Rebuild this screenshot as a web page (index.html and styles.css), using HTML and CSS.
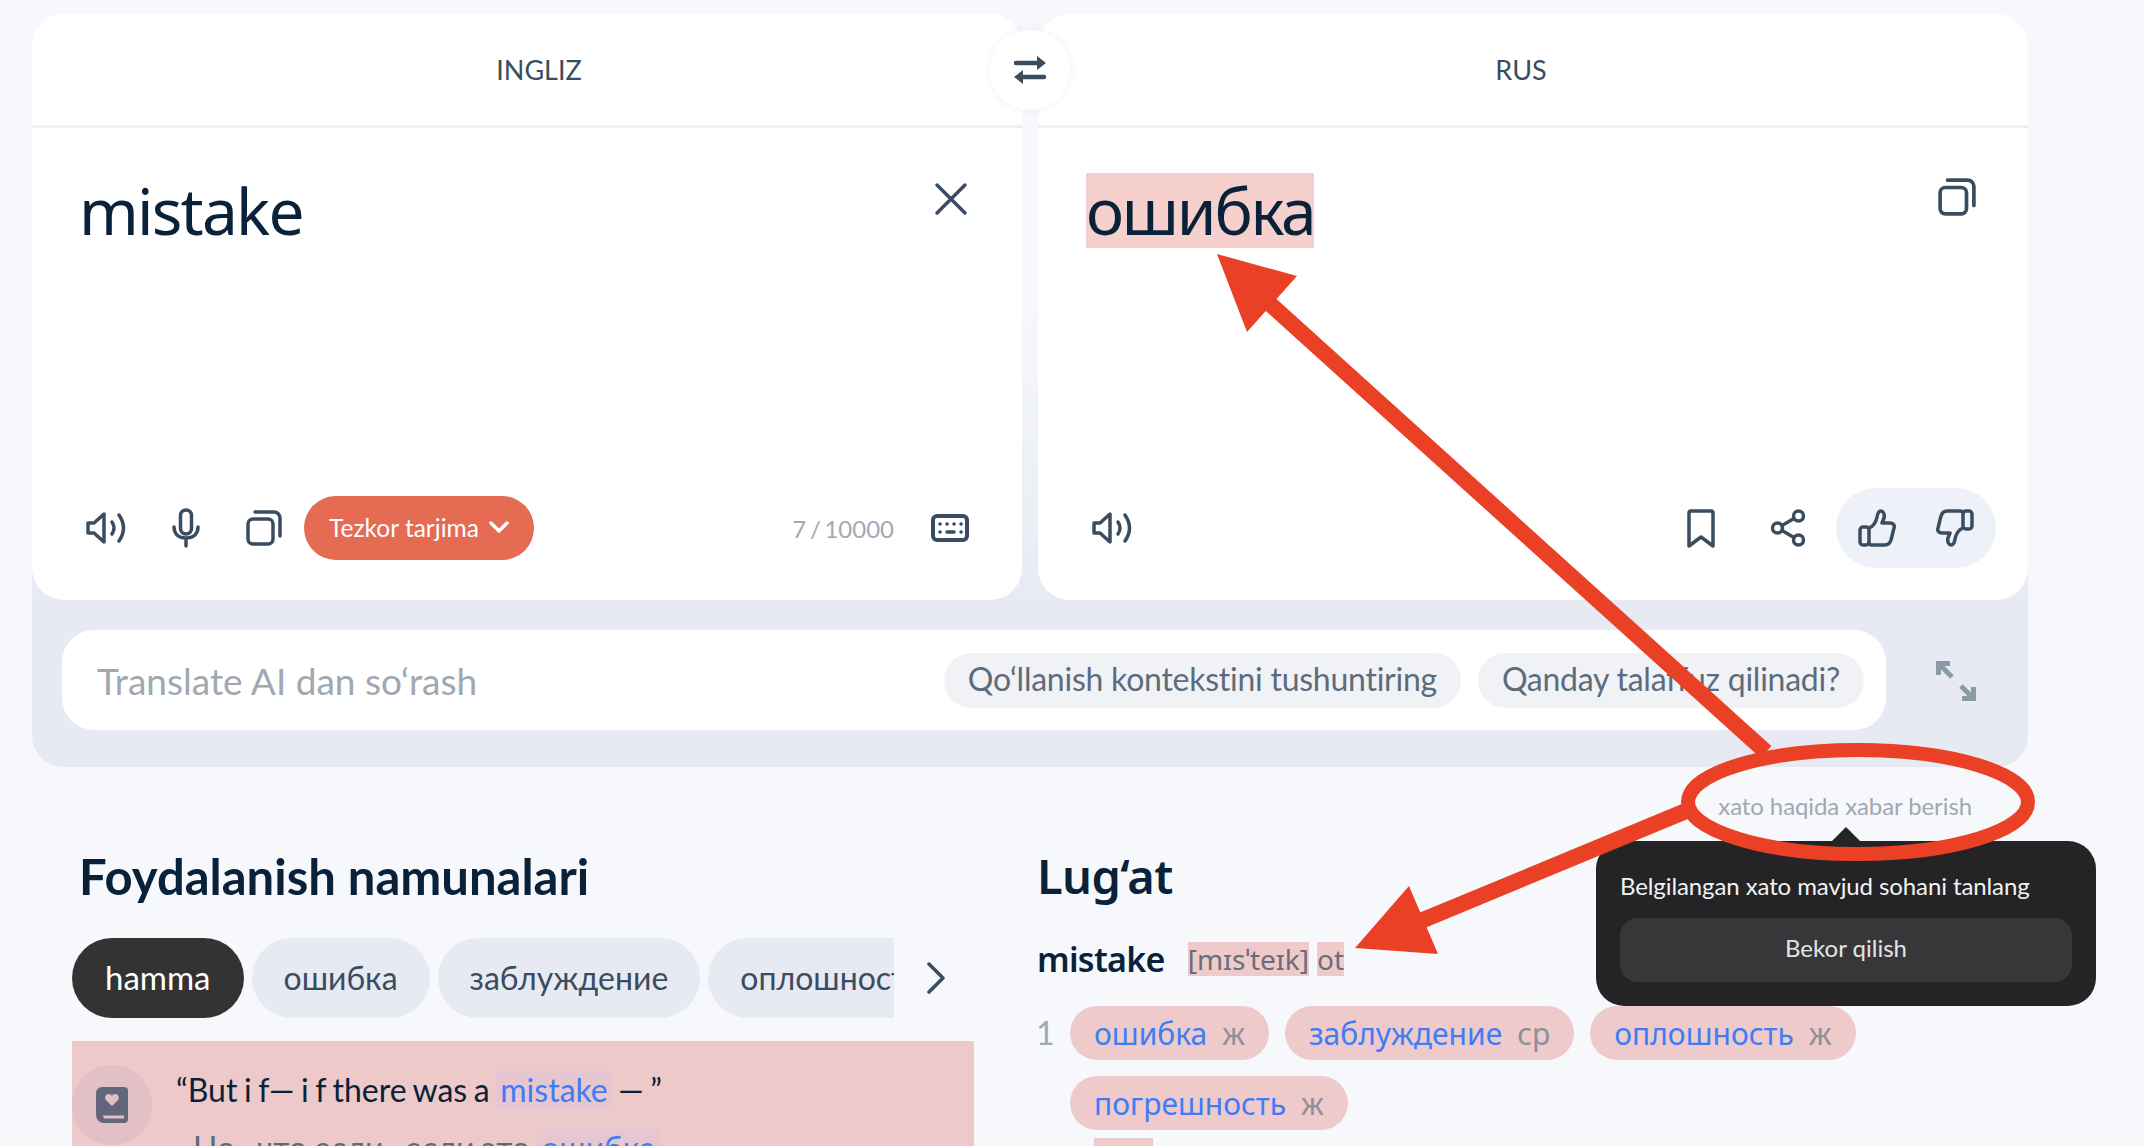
FILE: index.html
```html
<!DOCTYPE html>
<html lang="uz">
<head>
  <meta charset="UTF-8">
  <title>Tarjimon</title>
  <link rel="stylesheet" href="styles.css">
</head>
<body>
  <section class="translator">
    <div class="cards">
      <div class="card">
        <div class="card-head head-src">INGLIZ</div>
        <div class="card-body">
          <div class="text">mistake</div>
          <svg class="icon close-icon" width="34" height="34" viewBox="0 0 34 34"><path d="M3 3l28 28M31 3L3 31"/></svg>
        </div>
        <div class="card-foot">
          <svg class="icon" width="41" height="34" viewBox="0 0 41 34"><path d="M2 12h6l10-9v28l-10-9H2z"/><path d="M26 11q4 6 0 12M33 4q9 13 0 26"/></svg>
          <svg class="icon mic" width="28" height="40" viewBox="0 0 28 40"><rect x="8.500" y="2" width="11" height="24" rx="5.500"/><path d="M2 19c0 7 5 11 12 11s12-4 12-11M14 30v8"/></svg>
          <svg class="icon copy" width="36" height="36" viewBox="0 0 36 36"><rect x="2" y="9" width="25" height="25" rx="5"/><path d="M9 2h19a6 6 0 0 1 6 6v18"/></svg>
          <button class="speed-btn">Tezkor tarjima
            <svg width="20" height="12" viewBox="0 0 20 12"><path d="M2 2l8 8 8-8"/></svg>
          </button>
          <span class="counter">7 / 10000</span>
          <svg class="icon keyboard" width="38" height="28" viewBox="0 0 38 28"><rect x="2" y="2" width="34" height="24" rx="4"/><path class="dots" d="M9 10h.1M16 10h.1M23 10h.1M30 10h.1M9 18h.1M16 18h7M30 18h.1"/></svg>
        </div>
      </div>
      <div class="card">
        <div class="card-head head-dst">RUS</div>
        <div class="card-body">
          <div class="text"><span class="mark">ошибка</span></div>
          <svg class="icon copy-result" width="38" height="38" viewBox="0 0 36 36"><rect x="2" y="9" width="25" height="25" rx="5"/><path d="M9 2h19a6 6 0 0 1 6 6v18"/></svg>
        </div>
        <div class="card-foot result-foot">
          <svg class="icon" width="41" height="34" viewBox="0 0 41 34"><path d="M2 12h6l10-9v28l-10-9H2z"/><path d="M26 11q4 6 0 12M33 4q9 13 0 26"/></svg>
          <span class="spacer"></span>
          <svg class="icon" width="28" height="39" viewBox="0 0 28 39"><path d="M2 4a2 2 0 0 1 2-2h20a2 2 0 0 1 2 2v33l-12-9-12 9z"/></svg>
          <svg class="icon" width="36" height="38" viewBox="0 0 36 38"><circle cx="7.500" cy="19" r="5"/><circle cx="28.500" cy="7" r="5"/><circle cx="28.500" cy="31" r="5"/><path d="M12 16.500l12-7M12 21.500l12 7"/></svg>
          <div class="rate">
            <svg class="icon" width="38" height="38" viewBox="0 0 38 38"><rect x="2" y="18" width="9" height="18" rx="3"/><path d="M11 19c5-2 7-6 8-11 .5-3 2-6 4-6s4 3 3 7l-2 5h8c3 0 5 2 4 5l-3 12c-1 3-3 5-6 5H14c-2 0-3-1-3-2"/></svg>
            <svg class="icon" width="38" height="38" viewBox="0 0 38 38"><rect x="27" y="2" width="9" height="18" rx="3"/><path d="M27 19c-5 2-7 6-8 11-.5 3-2 6-4 6s-4-3-3-7l2-5H6c-3 0-5-2-4-5l3-12c1-3 3-5 6-5h13c2 0 3 1 3 2"/></svg>
          </div>
        </div>
      </div>
    </div>
    <div class="ask-row">
      <div class="ask">
        <span class="ask-hint">Translate AI dan so‘rash</span>
        <span class="ask-chip">Qo‘llanish kontekstini tushuntiring</span>
        <span class="ask-chip">Qanday talaffuz qilinadi?</span>
      </div>
      <svg class="expand" width="44" height="44" viewBox="0 0 44 44"><path d="M4.500 16V4.500H16M5 5l13 13M39.500 28v11.500H28M39 39L27 27"/></svg>
    </div>
    <div class="swap">
      <svg class="swap-icon" width="34" height="30" viewBox="0 0 34 30"><path class="swap-line" d="M3 8h24M31 22H8"/><path d="M24 1l9 7-9 7zM10 15l-9 7 9 7z"/></svg>
    </div>
  </section>

  <div class="report-row"><span class="report">xato haqida xabar berish</span></div>

  <main class="columns">
    <section class="examples">
      <h2>Foydalanish namunalari</h2>
      <div class="filter-row">
        <div class="filters">
          <span class="filter active">hamma</span>
          <span class="filter">ошибка</span>
          <span class="filter">заблуждение</span>
          <span class="filter">оплошность</span>
        </div>
        <svg class="icon next" width="20" height="32" viewBox="0 0 20 32"><path d="M3 2l14 14L3 30"/></svg>
      </div>
      <div class="example">
        <div class="book">
          <svg width="32" height="36" viewBox="0 0 32 36"><path d="M6 0h22a4 4 0 0 1 4 4v28a4 4 0 0 1-4 4H8a8 8 0 0 1-8-8V6a6 6 0 0 1 6-6z"/><path class="hole" d="M7 28.500h21v3H9c-1 0-2-1-2-3zM16 19l-6-6c-2-3 0-6 3-6 1 0 2.500.7 3 2 .5-1.300 2-2 3-2 3 0 5 3 3 6z"/></svg>
        </div>
        <div class="example-text">
          <p class="src">“But i f— i f there was a <span class="hit">mistake</span> — ”</p>
          <p class="dst">Но , что если , если это <span class="hit">ошибка</span></p>
        </div>
      </div>
    </section>

    <section class="dict">
      <h2>Lug‘at</h2>
      <div class="dict-word">
        <strong>mistake</strong>
        <span class="flag">[mɪsˈteɪk]</span>
        <span class="flag">ot</span>
      </div>
      <div class="sense">
        <span class="sense-num">1</span>
        <div class="terms">
          <span class="term">ошибка <i>ж</i></span>
          <span class="term">заблуждение <i>ср</i></span>
          <span class="term">оплошность <i>ж</i></span>
          <span class="term">погрешность <i>ж</i></span>
        </div>
      </div>
      <div class="more-flag"></div>
    </section>
  </main>

  <div class="popover">
    <p>Belgilangan xato mavjud sohani tanlang</p>
    <button>Bekor qilish</button>
  </div>

  <!-- qizil strelkalar va aylana -->
  <svg class="marks" width="2144" height="1146" viewBox="0 0 2144 1146">
    <path d="M1270 304L1766 752" class="line"/>
    <path d="M1217 254L1297 276L1247 332z" class="head"/>
    <path d="M1686 811L1423 920" class="line"/>
    <path d="M1355 948L1409 886L1438 954z" class="head"/>
    <ellipse cx="1858" cy="802" rx="170" ry="52" class="ring"/>
  </svg>
</body>
</html>
```

FILE: styles.css
```css
* {
  box-sizing: border-box;
}
html, body {
  height: 100%;
}
body {
  margin: 0;
  padding-top: 14px;
  overflow: hidden;
  position: relative;
  background: #f6f8fc;
  color: #0a2239;
  font-family: Lato, "Noto Sans", sans-serif;
}
p, h2 {
  margin: 0;
}
.icon {
  flex: none;
  fill: none;
  stroke: #3a4d60;
  stroke-width: 3.500;
  stroke-linecap: round;
  stroke-linejoin: round;
}

/* top block */
.translator {
  position: relative;
  width: 1996px;
  height: 753px;
  margin-left: 32px;
  border-radius: 32px;
  background: linear-gradient(to bottom, #f6f8fc 0, #f6f8fc 280px, #e7eaf3 600px);
}
.cards {
  display: grid;
  grid-template-columns: 990px 990px;
  gap: 16px;
}
.card {
  height: 586px;
  display: flex;
  flex-direction: column;
  background: #fff;
  border-radius: 32px;
}
.card-head {
  height: 114px;
  display: flex;
  align-items: center;
  justify-content: center;
  border-bottom: 3px solid #eef0f5;
  font-size: 27px;
  color: #3a4d60;
}
.head-src {
  padding-left: 24px;
}
.head-dst {
  padding-right: 24px;
}
.card-body {
  flex: 1;
  display: flex;
  justify-content: space-between;
  padding: 45px 50px 0 47px;
}
.text {
  font-size: 64px;
  line-height: 75px;
  height: 75px;
  letter-spacing: -1.800px;
  font-family: "Noto Sans", sans-serif;
}
.mark {
  display: inline-block;
  margin-left: 1px;
  letter-spacing: -2.200px;
  background: #f6d0cc;
}
.close-icon {
  margin-top: 9px;
  margin-right: 4px;
}
.copy-result {
  margin-top: 5px;
  margin-right: 2px;
}
.card-foot {
  height: 104px;
  display: flex;
  align-items: center;
  padding: 0 53px 40px 54px;
}
.mic {
  margin-left: 45px;
}
.copy {
  margin-left: 46px;
}
.speed-btn {
  margin-left: 22px;
  height: 64px;
  width: 230px;
  padding: 0 0 2px;
  border: none;
  border-radius: 32px;
  background: #e56b53;
  color: #fff;
  font: 24.500px Lato, sans-serif;
  display: flex;
  align-items: center;
  justify-content: center;
  gap: 10px;
}
.speed-btn svg {
  fill: none;
  stroke: #fff;
  stroke-width: 3.500;
  stroke-linecap: round;
  stroke-linejoin: round;
}
.counter {
  margin-left: auto;
  margin-right: 37px;
  font-size: 24px;
  word-spacing: -2.500px;
  color: #a2aab3;
}
.keyboard {
  stroke-width: 4;
}
.keyboard .dots {
  stroke-width: 3.500;
}
.result-foot {
  padding: 0 32px 40px 54px;
}
.spacer {
  flex: 1;
}
.result-foot > .icon + .icon {
  margin-left: 55px;
}
.rate {
  margin-left: 30px;
  width: 160px;
  height: 80px;
  display: flex;
  align-items: center;
  justify-content: center;
  gap: 40px;
  background: #eef1f8;
  border-radius: 40px;
}
.ask-row {
  height: 167px;
  background: #e7eaf3;
  border-radius: 0 0 32px 32px;
  display: flex;
  padding: 30px 0 0 30px;
  position: relative;
}
.ask {
  width: 1824px;
  height: 100px;
  display: flex;
  align-items: center;
  gap: 17px;
  padding: 0 22px 0 35px;
  background: #fff;
  border-radius: 32px;
}
.ask-hint {
  margin-right: auto;
  font-size: 37px;
  color: #a0a8b1;
}
.ask-chip {
  height: 55px;
  padding: 0 24px 3px;
  display: flex;
  align-items: center;
  border-radius: 28px;
  background: #f0f2f6;
  font-size: 32px;
  letter-spacing: -0.250px;
  color: #5c6c7c;
}
.expand {
  margin: 29px 0 0 48px;
  fill: none;
  stroke: #8c99a6;
  stroke-width: 5;
}
.swap {
  position: absolute;
  left: 958px;
  top: 16px;
  width: 80px;
  height: 80px;
  display: flex;
  align-items: center;
  justify-content: center;
  background: #fff;
  border-radius: 50%;
  box-shadow: 0 0 8px rgba(40, 60, 90, 0.08);
}
.swap-icon {
  fill: #3a4d60;
}
.swap-line {
  fill: none;
  stroke: #3a4d60;
  stroke-width: 4.500;
  stroke-linecap: round;
}

/* report link */
.report-row {
  height: 79px;
  padding: 24px 172px 0 0;
  text-align: right;
}
.report {
  font-size: 24px;
  line-height: 30px;
  letter-spacing: -0.100px;
  color: #a0a8b1;
}

/* bottom columns */
.columns {
  display: grid;
  grid-template-columns: 966px 1106px;
  padding-left: 72px;
}
h2 {
  font-size: 49px;
  line-height: 60px;
  font-weight: 700;
}
.dict h2 {
  margin-left: -1px;
  font-family: "Noto Sans", sans-serif;
  font-weight: 600;
  font-size: 47px;
  letter-spacing: -0.600px;
}
.examples h2 {
  padding-left: 7px;
}
.filter-row {
  margin-top: 32px;
  display: flex;
  align-items: center;
}
.filters {
  width: 822px;
  display: flex;
  gap: 8px;
  overflow: hidden;
}
.filter {
  flex: none;
  height: 80px;
  padding: 0 32px 2px;
  display: flex;
  align-items: center;
  border-radius: 40px;
  background: #e7eaf3;
  font-size: 32px;
  color: #3a4d60;
}
.filter.active {
  padding: 0 33px 2px;
  background: #333;
  color: #fff;
  font-size: 33px;
}
.next {
  margin-left: 32px;
}
.example {
  width: 902px;
  height: 200px;
  margin-top: 23px;
  padding-top: 24px;
  display: flex;
  gap: 24px;
  background: #edc9c9;
}
.book {
  width: 80px;
  height: 80px;
  flex: none;
  display: flex;
  align-items: center;
  justify-content: center;
  border-radius: 50%;
  background: #e3c0c6;
}
.book svg {
  fill: #63657a;
}
.book .hole {
  fill: #e3c0c6;
}
.src {
  margin-top: 6px;
  font-size: 32px;
  line-height: 38px;
  word-spacing: -1.600px;
}
.dst {
  margin-top: 20px;
  padding-left: 17px;
  font-size: 32px;
  line-height: 38px;
  word-spacing: -1px;
  color: #5c6c7c;
}
.hit {
  display: inline-block;
  padding: 0 4px;
  background: #e6c6d0;
  color: #3f7cf6;
}
.dict-word {
  margin-top: 30px;
  display: flex;
  align-items: center;
  gap: 8px;
  font-size: 28px;
  color: #6a6e7a;
}
.dict-word strong {
  margin-left: -1px;
  margin-right: 15px;
  font-family: "Noto Sans", sans-serif;
  font-size: 34px;
  font-weight: 600;
  letter-spacing: -0.700px;
  color: #0a2239;
}
.flag {
  display: inline-block;
  line-height: 34px;
  background: #efcaca;
  font-family: "Noto Sans", sans-serif;
  font-size: 28px;
}
.sense {
  margin-top: 24px;
  display: flex;
}
.sense-num {
  width: 34px;
  margin-left: -2px;
  font-size: 32px;
  line-height: 54px;
  color: #a0a8b1;
}
.terms {
  width: 800px;
  display: flex;
  flex-wrap: wrap;
  gap: 16px;
}
.term {
  height: 54px;
  padding: 0 24px;
  display: flex;
  align-items: center;
  gap: 15px;
  border-radius: 27px;
  background: #eecaca;
  font-family: "Noto Sans", sans-serif;
  font-size: 30px;
  color: #3f7cf6;
}
.term i {
  font-style: normal;
  color: #8e8f99;
}
.more-flag {
  width: 59px;
  height: 30px;
  margin: 8px 0 0 56px;
  background: #efcaca;
}

/* popover */
.popover {
  position: absolute;
  left: 1596px;
  top: 841px;
  width: 500px;
  height: 165px;
  padding: 30px 24px 0;
  border-radius: 28px;
  background: #242426;
  color: #f2f2f2;
  font-size: 24px;
}
.popover::before {
  content: "";
  position: absolute;
  left: 236px;
  top: -14px;
  border: 14px solid transparent;
  border-top: 0;
  border-bottom-color: #242426;
}
.popover p {
  line-height: 30px;
  letter-spacing: -0.100px;
}
.popover button {
  width: 100%;
  height: 64px;
  margin-top: 17px;
  padding-bottom: 6px;
  border: none;
  border-radius: 18px;
  background: #373739;
  color: #e4e4e4;
  font: 24px Lato, sans-serif;
}

/* annotation */
.marks {
  position: absolute;
  left: 0;
  top: 0;
}
.line {
  fill: none;
  stroke: #ea4025;
  stroke-width: 16;
}
.head {
  fill: #ea4025;
}
.ring {
  fill: none;
  stroke: #ea4025;
  stroke-width: 14;
}
```
